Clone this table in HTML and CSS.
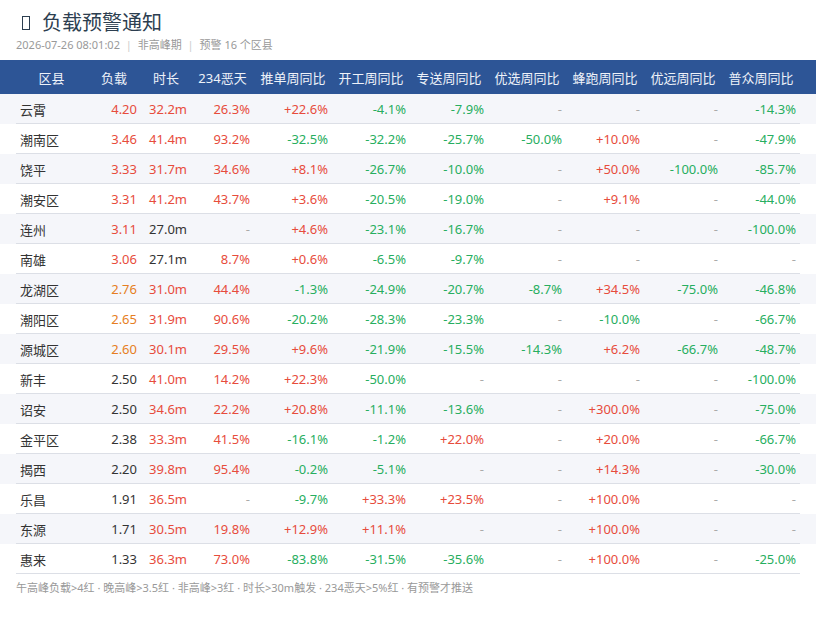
FILE: index.html
```html
<!DOCTYPE html>
<html lang="zh-CN">
<head>
<meta charset="utf-8">
<title>负载预警通知</title>
<link rel="stylesheet" href="styles.css">
</head>
<body>
<header class="head">
  <h1 class="title"><span class="icon"></span>负载预警通知</h1>
  <div class="sub">2026-07-26 08:01:02 <span class="sep">|</span> 非高峰期 <span class="sep">|</span> 预警 16 个区县</div>
</header>

<div class="thead">
  <div class="grid">
    <div>区县</div><div>负载</div><div>时长</div><div>234恶天</div><div>推单周同比</div><div>开工周同比</div><div>专送周同比</div><div>优选周同比</div><div>蜂跑周同比</div><div>优远周同比</div><div>普众周同比</div>
  </div>
</div>

<div class="tbody">
  <div class="row"><div class="grid">
    <div>云霄</div><div class="r">4.20</div><div class="r">32.2m</div><div class="r">26.3%</div><div class="r">+22.6%</div><div class="g">-4.1%</div><div class="g">-7.9%</div><div class="d">-</div><div class="d">-</div><div class="d">-</div><div class="g">-14.3%</div>
  </div></div>
  <div class="row"><div class="grid">
    <div>潮南区</div><div class="r">3.46</div><div class="r">41.4m</div><div class="r">93.2%</div><div class="g">-32.5%</div><div class="g">-32.2%</div><div class="g">-25.7%</div><div class="g">-50.0%</div><div class="r">+10.0%</div><div class="d">-</div><div class="g">-47.9%</div>
  </div></div>
  <div class="row"><div class="grid">
    <div>饶平</div><div class="r">3.33</div><div class="r">31.7m</div><div class="r">34.6%</div><div class="r">+8.1%</div><div class="g">-26.7%</div><div class="g">-10.0%</div><div class="d">-</div><div class="r">+50.0%</div><div class="g">-100.0%</div><div class="g">-85.7%</div>
  </div></div>
  <div class="row"><div class="grid">
    <div>潮安区</div><div class="r">3.31</div><div class="r">41.2m</div><div class="r">43.7%</div><div class="r">+3.6%</div><div class="g">-20.5%</div><div class="g">-19.0%</div><div class="d">-</div><div class="r">+9.1%</div><div class="d">-</div><div class="g">-44.0%</div>
  </div></div>
  <div class="row"><div class="grid">
    <div>连州</div><div class="r">3.11</div><div>27.0m</div><div class="d">-</div><div class="r">+4.6%</div><div class="g">-23.1%</div><div class="g">-16.7%</div><div class="d">-</div><div class="d">-</div><div class="d">-</div><div class="g">-100.0%</div>
  </div></div>
  <div class="row"><div class="grid">
    <div>南雄</div><div class="r">3.06</div><div>27.1m</div><div class="r">8.7%</div><div class="r">+0.6%</div><div class="g">-6.5%</div><div class="g">-9.7%</div><div class="d">-</div><div class="d">-</div><div class="d">-</div><div class="d">-</div>
  </div></div>
  <div class="row"><div class="grid">
    <div>龙湖区</div><div class="o">2.76</div><div class="r">31.0m</div><div class="r">44.4%</div><div class="g">-1.3%</div><div class="g">-24.9%</div><div class="g">-20.7%</div><div class="g">-8.7%</div><div class="r">+34.5%</div><div class="g">-75.0%</div><div class="g">-46.8%</div>
  </div></div>
  <div class="row"><div class="grid">
    <div>潮阳区</div><div class="o">2.65</div><div class="r">31.9m</div><div class="r">90.6%</div><div class="g">-20.2%</div><div class="g">-28.3%</div><div class="g">-23.3%</div><div class="d">-</div><div class="g">-10.0%</div><div class="d">-</div><div class="g">-66.7%</div>
  </div></div>
  <div class="row"><div class="grid">
    <div>源城区</div><div class="o">2.60</div><div class="r">30.1m</div><div class="r">29.5%</div><div class="r">+9.6%</div><div class="g">-21.9%</div><div class="g">-15.5%</div><div class="g">-14.3%</div><div class="r">+6.2%</div><div class="g">-66.7%</div><div class="g">-48.7%</div>
  </div></div>
  <div class="row"><div class="grid">
    <div>新丰</div><div>2.50</div><div class="r">41.0m</div><div class="r">14.2%</div><div class="r">+22.3%</div><div class="g">-50.0%</div><div class="d">-</div><div class="d">-</div><div class="d">-</div><div class="d">-</div><div class="g">-100.0%</div>
  </div></div>
  <div class="row"><div class="grid">
    <div>诏安</div><div>2.50</div><div class="r">34.6m</div><div class="r">22.2%</div><div class="r">+20.8%</div><div class="g">-11.1%</div><div class="g">-13.6%</div><div class="d">-</div><div class="r">+300.0%</div><div class="d">-</div><div class="g">-75.0%</div>
  </div></div>
  <div class="row"><div class="grid">
    <div>金平区</div><div>2.38</div><div class="r">33.3m</div><div class="r">41.5%</div><div class="g">-16.1%</div><div class="g">-1.2%</div><div class="r">+22.0%</div><div class="d">-</div><div class="r">+20.0%</div><div class="d">-</div><div class="g">-66.7%</div>
  </div></div>
  <div class="row"><div class="grid">
    <div>揭西</div><div>2.20</div><div class="r">39.8m</div><div class="r">95.4%</div><div class="g">-0.2%</div><div class="g">-5.1%</div><div class="d">-</div><div class="d">-</div><div class="r">+14.3%</div><div class="d">-</div><div class="g">-30.0%</div>
  </div></div>
  <div class="row"><div class="grid">
    <div>乐昌</div><div>1.91</div><div class="r">36.5m</div><div class="d">-</div><div class="g">-9.7%</div><div class="r">+33.3%</div><div class="r">+23.5%</div><div class="d">-</div><div class="r">+100.0%</div><div class="d">-</div><div class="d">-</div>
  </div></div>
  <div class="row"><div class="grid">
    <div>东源</div><div>1.71</div><div class="r">30.5m</div><div class="r">19.8%</div><div class="r">+12.9%</div><div class="r">+11.1%</div><div class="d">-</div><div class="d">-</div><div class="r">+100.0%</div><div class="d">-</div><div class="d">-</div>
  </div></div>
  <div class="row"><div class="grid">
    <div>惠来</div><div>1.33</div><div class="r">36.3m</div><div class="r">73.0%</div><div class="g">-83.8%</div><div class="g">-31.5%</div><div class="g">-35.6%</div><div class="d">-</div><div class="r">+100.0%</div><div class="d">-</div><div class="g">-25.0%</div>
  </div></div>
</div>

<footer class="foot">午高峰负载&gt;4红 · 晚高峰&gt;3.5红 · 非高峰&gt;3红 · 时长&gt;30m触发 · 234恶天&gt;5%红 · 有预警才推送</footer>
</body>
</html>
```

FILE: styles.css
```css
* { box-sizing: border-box; }

body {
  margin: 0;
  background: #ffffff;
  font-family: "Noto Sans", "Noto Sans CJK SC", sans-serif;
  color: #333333;
}

.head {
  padding: 10px 16px 0;
}

.title {
  display: flex;
  align-items: center;
  margin: 0;
  font-size: 20px;
  font-weight: 400;
  line-height: 26px;
  color: #2c3e50;
}

.icon {
  display: inline-block;
  width: 8px;
  height: 14px;
  border: 1.5px solid #2c3e50;
  margin: 0 12px 0 6px;
}

.sub {
  margin-top: 1px;
  font-size: 11px;
  line-height: 16px;
  color: #999999;
}

.sep {
  color: #cccccc;
  margin: 0 3px;
}

.grid {
  display: grid;
  grid-template-columns: 71px 54px 50px 63px repeat(7, 78px);
  margin: 0 16px;
  align-items: center;
}

.grid > div {
  padding: 0 4px;
  text-align: right;
  white-space: nowrap;
}

.grid > div:first-child {
  text-align: left;
}

.thead {
  margin-top: 7px;
  background: #2d5596;
  color: #eef2f9;
  font-size: 13px;
}

.thead .grid {
  height: 34px;
}

.thead .grid > div {
  text-align: center;
}

.tbody {
  font-size: 13px;
}

.row:nth-child(odd) {
  background: #f5f6fa;
}

.row .grid {
  height: 30px;
  border-bottom: 1px solid #dcdfe6;
  padding-top: 1px;
}

.r { color: #e74c3c; }
.g { color: #27ae60; }
.o { color: #e67e22; }
.d { color: #aaaaaa; }

.foot {
  margin: 6px 16px 0;
  font-size: 11px;
  line-height: 16px;
  color: #999999;
}
```
